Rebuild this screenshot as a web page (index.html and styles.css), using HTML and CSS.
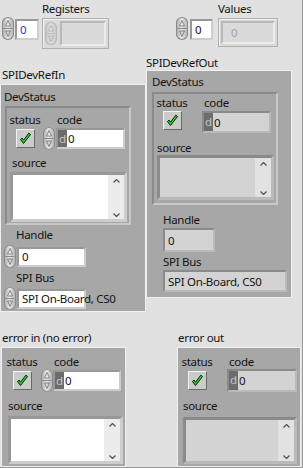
FILE: index.html
```html
<!DOCTYPE html>
<html lang="en">
<head>
    <meta charset="UTF-8">
    <meta name="viewport" content="width=device-width, initial-scale=1.0">
    <title>SPI Front Panel</title>
    <link rel="stylesheet" href="styles.css">
</head>
<body>

<div class="panel">

    <!-- Registers array -->
    <div class="obj reg">
        <div class="lbl reg-lbl">Registers</div>
        <div class="arr-row">
            <svg class="spin" viewBox="0 0 12 23"><path class="tri" d="M6 3.5 8.5 9h-5z"/><path class="sep" d="M1.5 11.5h9"/><path class="tri dn" d="M6 19.5 8.5 14h-5z"/></svg>
            <div class="field ctl reg-idx">0</div>
            <div class="arr reg-arr">
                <svg class="spin off" viewBox="0 0 12 23"><path class="tri" d="M6 3.5 8.5 9h-5z"/><path class="sep" d="M1.5 11.5h9"/><path class="tri dn" d="M6 19.5 8.5 14h-5z"/></svg>
                <div class="elem"></div>
            </div>
        </div>
    </div>

    <!-- Values array -->
    <div class="obj vals">
        <div class="lbl val-lbl">Values</div>
        <div class="arr-row">
            <svg class="spin" viewBox="0 0 12 23"><path class="tri" d="M6 3.5 8.5 9h-5z"/><path class="sep" d="M1.5 11.5h9"/><path class="tri dn" d="M6 19.5 8.5 14h-5z"/></svg>
            <div class="field ctl val-idx">0</div>
            <div class="arr val-arr">
                <div class="elem">0</div>
            </div>
        </div>
    </div>

    <!-- SPIDevRefIn -->
    <div class="obj ref-in">
        <div class="lbl">SPIDevRefIn</div>
        <div class="cluster">
            <div class="lbl">DevStatus</div>
            <div class="sub">
                <div class="err-grid">
                    <div class="lbl c1">status</div>
                    <div class="lbl c2">code</div>
                    <div class="c1"><div class="led"><svg viewBox="0 0 13 13"><path d="M1.5 7.5 4.5 11.5 11.5 2.5 9.8 1.2 4.6 8.2 3 6z"/></svg></div></div>
                    <div class="num">
                        <svg class="spin" viewBox="0 0 12 23"><path class="tri" d="M6 3.5 8.5 9h-5z"/><path class="sep" d="M1.5 11.5h9"/><path class="tri dn" d="M6 19.5 8.5 14h-5z"/></svg>
                        <div class="field ctl code"><span class="radix">d</span>0</div>
                    </div>
                </div>
                <div class="lbl src-lbl">source</div>
                <div class="src ctl">
                    <div class="sbar">
                        <svg viewBox="0 0 7 4"><path d="M.5 3.5 3.5.5l3 3"/></svg>
                        <svg viewBox="0 0 7 4"><path d="M.5.5l3 3 3-3"/></svg>
                    </div>
                </div>
            </div>
            <div class="lbl h-lbl">Handle</div>
            <div class="num h-num">
                <svg class="spin" viewBox="0 0 12 23"><path class="tri" d="M6 3.5 8.5 9h-5z"/><path class="sep" d="M1.5 11.5h9"/><path class="tri dn" d="M6 19.5 8.5 14h-5z"/></svg>
                <div class="field ctl handle">0</div>
            </div>
            <div class="lbl b-lbl">SPI Bus</div>
            <div class="num b-num">
                <svg class="spin" viewBox="0 0 12 23"><path class="tri" d="M6 3.5 8.5 9h-5z"/><path class="sep" d="M1.5 11.5h9"/><path class="tri dn" d="M6 19.5 8.5 14h-5z"/></svg>
                <div class="field ctl bus">SPI On-Board, CS0</div>
            </div>
        </div>
    </div>

    <!-- SPIDevRefOut -->
    <div class="obj ref-out">
        <div class="lbl">SPIDevRefOut</div>
        <div class="cluster">
            <div class="lbl">DevStatus</div>
            <div class="sub">
                <div class="err-grid">
                    <div class="lbl c1">status</div>
                    <div class="lbl c2">code</div>
                    <div class="c1"><div class="led"><svg viewBox="0 0 13 13"><path d="M1.5 7.5 4.5 11.5 11.5 2.5 9.8 1.2 4.6 8.2 3 6z"/></svg></div></div>
                    <div class="num">
                        <div class="field ind code"><span class="radix">d</span>0</div>
                    </div>
                </div>
                <div class="lbl src-lbl">source</div>
                <div class="src ind">
                    <div class="sbar">
                        <svg viewBox="0 0 7 4"><path d="M.5 3.5 3.5.5l3 3"/></svg>
                        <svg viewBox="0 0 7 4"><path d="M.5.5l3 3 3-3"/></svg>
                    </div>
                </div>
            </div>
            <div class="lbl h-lbl">Handle</div>
            <div class="field ind handle">0</div>
            <div class="lbl b-lbl">SPI Bus</div>
            <div class="field ind bus">SPI On-Board, CS0</div>
        </div>
    </div>

    <!-- error in -->
    <div class="obj err-in">
        <div class="lbl">error in (no error)</div>
        <div class="cluster">
            <div class="err-grid">
                <div class="lbl c1">status</div>
                <div class="lbl c2">code</div>
                <div class="c1"><div class="led"><svg viewBox="0 0 13 13"><path d="M1.5 7.5 4.5 11.5 11.5 2.5 9.8 1.2 4.6 8.2 3 6z"/></svg></div></div>
                <div class="num">
                    <svg class="spin" viewBox="0 0 12 23"><path class="tri" d="M6 3.5 8.5 9h-5z"/><path class="sep" d="M1.5 11.5h9"/><path class="tri dn" d="M6 19.5 8.5 14h-5z"/></svg>
                    <div class="field ctl code"><span class="radix">d</span>0</div>
                </div>
            </div>
            <div class="lbl src-lbl">source</div>
            <div class="src ctl">
                <div class="sbar">
                    <svg viewBox="0 0 7 4"><path d="M.5 3.5 3.5.5l3 3"/></svg>
                    <svg viewBox="0 0 7 4"><path d="M.5.5l3 3 3-3"/></svg>
                </div>
            </div>
        </div>
    </div>

    <!-- error out -->
    <div class="obj err-out">
        <div class="lbl">error out</div>
        <div class="cluster">
            <div class="err-grid">
                <div class="lbl c1">status</div>
                <div class="lbl c2">code</div>
                <div class="c1"><div class="led"><svg viewBox="0 0 13 13"><path d="M1.5 7.5 4.5 11.5 11.5 2.5 9.8 1.2 4.6 8.2 3 6z"/></svg></div></div>
                <div class="num">
                    <div class="field ind code"><span class="radix">d</span>0</div>
                </div>
            </div>
            <div class="lbl src-lbl">source</div>
            <div class="src ind">
                <div class="sbar">
                    <svg viewBox="0 0 7 4"><path d="M.5 3.5 3.5.5l3 3"/></svg>
                    <svg viewBox="0 0 7 4"><path d="M.5.5l3 3 3-3"/></svg>
                </div>
            </div>
        </div>
    </div>

</div>

</body>
</html>
```

FILE: styles.css
```css
* {
    box-sizing: border-box;
}

body {
    margin: 0;
    font-family: "Noto Sans", "Open Sans", sans-serif;
    font-size: 11.5px;
    letter-spacing: -0.3px;
    line-height: 15px;
    color: #141414;
}

/* front panel canvas */
.panel {
    position: relative;
    width: 303px;
    height: 468px;
    background: #e1e1e1;
    border-right: 1px solid #9a9a9a;
    border-bottom: 1px solid #9a9a9a;
    overflow: hidden;
}

.obj {
    position: absolute;
}

.lbl {
    height: 15px;
    white-space: nowrap;
}

/* increment / decrement buttons */
.spin {
    display: block;
    flex: none;
    width: 12px;
    height: 23px;
    border-radius: 6px;
    background: linear-gradient(90deg, #a2a2a2, #e8e8e8 45%, #acacac);
    box-shadow: inset 0 0 0 1px #8a8a8a;
}

.spin .tri {
    fill: #ececec;
    stroke: #6e6e6e;
    stroke-width: 0.8;
}

.spin .tri.dn {
    fill: #d4d4d4;
}

.spin .sep {
    stroke: #8a8a8a;
    stroke-width: 1;
}

.spin.off {
    opacity: 0.4;
}

/* numeric / string boxes */
.field {
    display: flex;
    align-items: center;
    height: 21px;
    padding-left: 3px;
    white-space: nowrap;
}

.ctl {
    background: #ffffff;
    border: 2px solid;
    border-color: #989898 #cdcdcd #cdcdcd #989898;
}

.ind {
    background: #d3d3d3;
    border: 2px solid;
    border-color: #8a8a8a #bababa #bababa #8a8a8a;
}

.num {
    display: flex;
    align-items: center;
}

.radix {
    align-self: stretch;
    width: 9px;
    margin-left: -3px;
    margin-right: 1px;
    background: #6c6c6c;
    color: #c6c6c6;
    text-align: center;
    line-height: 17px;
}

/* top arrays */
.reg {
    left: 2px;
    top: 1px;
}

.vals {
    left: 176px;
    top: 1px;
}

.reg-lbl {
    margin-left: 40px;
}

.val-lbl {
    margin-left: 42px;
}

.arr-row {
    display: flex;
    align-items: flex-start;
    margin-top: 1px;
}

.reg-idx {
    width: 24px;
    margin: 2px 0 0 1px;
    color: #1c3fc4;
}

.val-idx {
    width: 23px;
    margin: 2px 0 0 2px;
}

.arr {
    display: flex;
    align-items: center;
    gap: 3px;
    padding: 2px;
    background: #d9d9d9;
    border: 1px solid #b0b0b0;
    box-shadow: inset 1px 1px 0 #f0f0f0;
}

.arr .elem {
    flex: 1;
    align-self: stretch;
    background: #dadada;
    border: 2px solid;
    border-color: #b8b8b8 #ececec #ececec #b8b8b8;
    color: #a4a4a4;
    padding-left: 8px;
    line-height: 19px;
}

.reg-arr {
    width: 67px;
    height: 31px;
    margin: 1px 0 0 3px;
}

.val-arr {
    width: 60px;
    height: 29px;
    margin: 1px 0 0 5px;
}

/* clusters */
.cluster {
    background: #a7a7a7;
    border: 1px solid #efefef;
}

.sub {
    border: 2px solid;
    border-color: #8a8a8a #c8c8c8 #c8c8c8 #8a8a8a;
}

.err-grid {
    display: grid;
    grid-template-columns: 36px auto;
    align-items: center;
}

.c1 {
    display: flex;
    justify-content: center;
}

.c2 {
    padding-left: 14px;
}

.led {
    width: 19px;
    height: 19px;
    display: flex;
    align-items: center;
    justify-content: center;
    background: #c9ccc9;
    border: 1px solid;
    border-color: #f2f2f2 #6a6a6a #6a6a6a #f2f2f2;
}

.led svg {
    width: 13px;
    height: 13px;
}

.led path {
    fill: #22dc22;
    stroke: #0c1e0c;
    stroke-width: 1;
}

.src {
    display: flex;
    justify-content: flex-end;
    border-width: 3px;
}

.sbar {
    width: 16px;
    display: flex;
    flex-direction: column;
    justify-content: space-between;
    align-items: center;
    padding: 4px 0 2px;
    background: #ececec;
}

.ind .sbar {
    background: #e2e2e2;
}

.sbar svg {
    width: 7px;
    height: 4px;
}

.sbar path {
    fill: none;
    stroke: #505050;
    stroke-width: 1.2;
}

/* SPIDevRefIn */
.ref-in {
    left: 0;
    top: 67px;
}

.ref-in > .lbl {
    padding-left: 2px;
}

.ref-in .cluster {
    width: 146px;
    height: 228px;
    margin-top: 2px;
    padding: 4px 0 0 3px;
}

.ref-in .sub {
    width: 126px;
    height: 119px;
    margin: 2px 0 0 1px;
    padding-top: 4px;
}

.ref-in .num .field {
    width: 69px;
    margin-left: 1px;
}

.ref-in .src-lbl {
    margin: 5px 0 0 5px;
}

.ref-in .src {
    width: 117px;
    height: 50px;
    margin: 2px 0 0 3px;
}

.ref-in .h-lbl {
    margin: 2px 0 0 12px;
}

.ref-in .h-num {
    margin-top: 3px;
}

.ref-in .handle {
    width: 50px;
    height: 20px;
    margin-left: 2px;
}

.ref-in .b-lbl {
    margin: 2px 0 0 12px;
}

.ref-in .b-num {
    margin-top: 2px;
}

.ref-in .bus {
    width: 121px;
    height: 20px;
    margin-left: 2px;
}

/* SPIDevRefOut */
.ref-out {
    left: 146px;
    top: 55px;
}

.ref-out .cluster {
    width: 146px;
    height: 228px;
    padding: 3px 0 0 5px;
}

.ref-out .sub {
    width: 126px;
    height: 113px;
    margin-top: 3px;
    padding-top: 1px;
}

.ref-out .err-grid {
    align-items: start;
}

.ref-out .err-grid .led {
    margin-top: 1px;
}

.ref-out .num .field {
    width: 69px;
    height: 22px;
    margin: 1px 0 0 12px;
}

.ref-out .src-lbl {
    margin: 7px 0 0 3px;
}

.ref-out .src {
    width: 117px;
    height: 45px;
    margin-left: 3px;
}

.ref-out .h-lbl {
    margin: 7px 0 0 11px;
}

.ref-out .handle {
    width: 52px;
    height: 24px;
    margin: 1px 0 0 11px;
}

.ref-out .b-lbl {
    margin: 2px 0 0 11px;
}

.ref-out .bus {
    width: 124px;
    height: 22px;
    margin: 1px 0 0 11px;
}

/* error clusters */
.err-in {
    left: 1px;
    top: 330px;
}

.err-out {
    left: 177px;
    top: 330px;
}

.err-in > .lbl,
.err-out > .lbl {
    padding-left: 1px;
}

.err-in .cluster,
.err-out .cluster {
    height: 120px;
    margin-top: 2px;
    padding-top: 6px;
}

.err-in .cluster {
    width: 125px;
    padding-left: 2px;
}

.err-out .cluster {
    width: 124px;
    padding-left: 1px;
}

.err-in .err-grid .num {
    margin-left: 1px;
}

.err-in .num .field {
    width: 68px;
    margin-left: 0;
}

.err-out .num .field {
    width: 70px;
    height: 23px;
    margin-left: 12px;
}

.err-in .src-lbl,
.err-out .src-lbl {
    margin: 6px 0 0 4px;
}

.err-in .src {
    width: 115px;
    height: 48px;
    margin: 3px 0 0 4px;
}

.err-out .src {
    width: 114px;
    height: 47px;
    margin: 4px 0 0 4px;
}
```
